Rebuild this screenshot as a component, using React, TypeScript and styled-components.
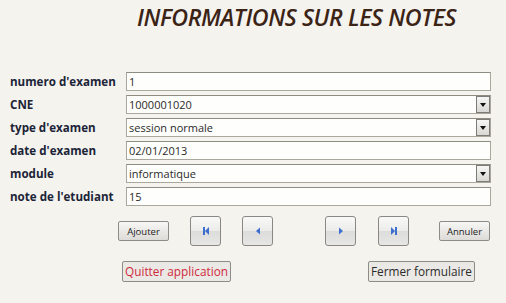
import styled, { createGlobalStyle } from "styled-components";

const GlobalStyle = createGlobalStyle`
  html, body {
    margin: 0;
    padding: 0;
    background: #f4f3ee;
  }
  body {
    font-family: "Open Sans", "Liberation Sans", sans-serif;
  }
`;

const Page = styled.div`
  width: 506px;
  height: 303px;
  background: #f4f3ee;
  display: flex;
  flex-direction: column;
  overflow: hidden;
`;

const Title = styled.h1`
  margin: 3px 0 0 137px;
  font-family: "Open Sans", sans-serif;
  font-style: italic;
  font-weight: 600;
  font-size: 23.2px;
  line-height: 28px;
  letter-spacing: -0.4px;
  color: #3b2316;
  white-space: nowrap;
`;

const Form = styled.div`
  margin: 41px 0 0 10px;
  display: grid;
  grid-template-columns: 116px 365px;
  row-gap: 4px;
`;

const Label = styled.label`
  display: flex;
  align-items: center;
  height: 19px;
  font-family: "Open Sans", sans-serif;
  font-weight: 700;
  font-size: 11.6px;
  color: #1c2438;
  white-space: nowrap;
`;

const Field = styled.div`
  position: relative;
  height: 19px;
  box-sizing: border-box;
  border: 1px solid #aaa79d;
  border-top-color: #8f8c83;
  background: #fefefc;
  display: flex;
  align-items: center;
  padding-left: 2px;
  font-family: "Open Sans", sans-serif;
  font-size: 11px;
  color: #2a2a2a;
`;

const DropButton = styled.span`
  position: absolute;
  right: 0;
  top: 0;
  bottom: 0;
  width: 14px;
  box-sizing: border-box;
  border: 1px solid #7d7b76;
  background: linear-gradient(#f6f6f4, #d8d7d3);
  display: flex;
  align-items: center;
  justify-content: center;

  &::after {
    content: "";
    border-left: 3.5px solid transparent;
    border-right: 3.5px solid transparent;
    border-top: 4px solid #111;
  }
`;

const NavRow = styled.div`
  margin: 10px 0 0 118px;
  display: flex;
  align-items: center;
  height: 30px;
`;

const SmallButton = styled.button<{ $gap: number }>`
  margin-left: ${(p) => p.$gap}px;
  width: 51px;
  height: 20px;
  padding: 0;
  box-sizing: border-box;
  border: 1px solid #8e8c87;
  border-radius: 2px;
  background: linear-gradient(#f7f7f5, #dcdbd7);
  font-family: "Open Sans", sans-serif;
  font-size: 9.5px;
  color: #222;
`;

const NavButton = styled.button<{ $gap: number }>`
  margin-left: ${(p) => p.$gap}px;
  width: 31px;
  height: 30px;
  padding: 0;
  box-sizing: border-box;
  border: 1px solid #8a8884;
  border-radius: 3px;
  background: linear-gradient(#f9f9f8 0%, #ebebe9 50%, #dcdcda 51%, #e6e6e4 100%);
  display: flex;
  align-items: center;
  justify-content: center;
`;

const BottomRow = styled.div`
  margin: 15px 0 0 122px;
  display: flex;
  align-items: center;
`;

const WideButton = styled.button<{ $danger?: boolean; $gap: number }>`
  margin-left: ${(p) => p.$gap}px;
  height: 21px;
  padding: 0 2px;
  box-sizing: border-box;
  border: 1px solid #8e8c87;
  border-radius: 2px;
  background: #ebe9e5;
  font-family: "Open Sans", sans-serif;
  font-size: 11.8px;
  line-height: 19px;
  color: ${(p) => (p.$danger ? "#cf2a3c" : "#2b2b2b")};
  white-space: nowrap;
`;

const blue = "#3d6fd0";

function Icon({ kind }: { kind: "first" | "prev" | "next" | "last" }) {
  return (
    <svg width="10" height="10" viewBox="0 0 10 10">
      {kind === "first" && (
        <>
          <rect x="2" y="1" width="2" height="8" fill={blue} />
          <path d="M8 1 L4 5 L8 9 Z" fill={blue} />
        </>
      )}
      {kind === "prev" && <path d="M7 1.5 L3 5 L7 8.5 Z" fill={blue} />}
      {kind === "next" && <path d="M3 1.5 L7 5 L3 8.5 Z" fill={blue} />}
      {kind === "last" && (
        <>
          <path d="M2 1 L6 5 L2 9 Z" fill={blue} />
          <rect x="6" y="1" width="2" height="8" fill={blue} />
        </>
      )}
    </svg>
  );
}

const rows: { label: string; value: string; select?: boolean }[] = [
  { label: "numero d'examen", value: "1" },
  { label: "CNE", value: "1000001020", select: true },
  { label: "type d'examen", value: "session normale", select: true },
  { label: "date d'examen", value: "02/01/2013" },
  { label: "module", value: "informatique", select: true },
  { label: "note de l'etudiant", value: "15" },
];

export default function App() {
  return (
    <>
      <GlobalStyle />
      <Page>
        <Title>INFORMATIONS SUR LES NOTES</Title>
        <Form>
          {rows.map((r) => [
            <Label key={r.label + "-l"}>{r.label}</Label>,
            <Field key={r.label + "-f"}>
              {r.value}
              {r.select && <DropButton />}
            </Field>,
          ])}
        </Form>
        <NavRow>
          <SmallButton $gap={0}>Ajouter</SmallButton>
          <NavButton $gap={21}>
            <Icon kind="first" />
          </NavButton>
          <NavButton $gap={21}>
            <Icon kind="prev" />
          </NavButton>
          <NavButton $gap={52}>
            <Icon kind="next" />
          </NavButton>
          <NavButton $gap={22}>
            <Icon kind="last" />
          </NavButton>
          <SmallButton $gap={30}>Annuler</SmallButton>
        </NavRow>
        <BottomRow>
          <WideButton $danger $gap={0}>
            Quitter application
          </WideButton>
          <WideButton $gap={137}>Fermer formulaire</WideButton>
        </BottomRow>
      </Page>
    </>
  );
}
